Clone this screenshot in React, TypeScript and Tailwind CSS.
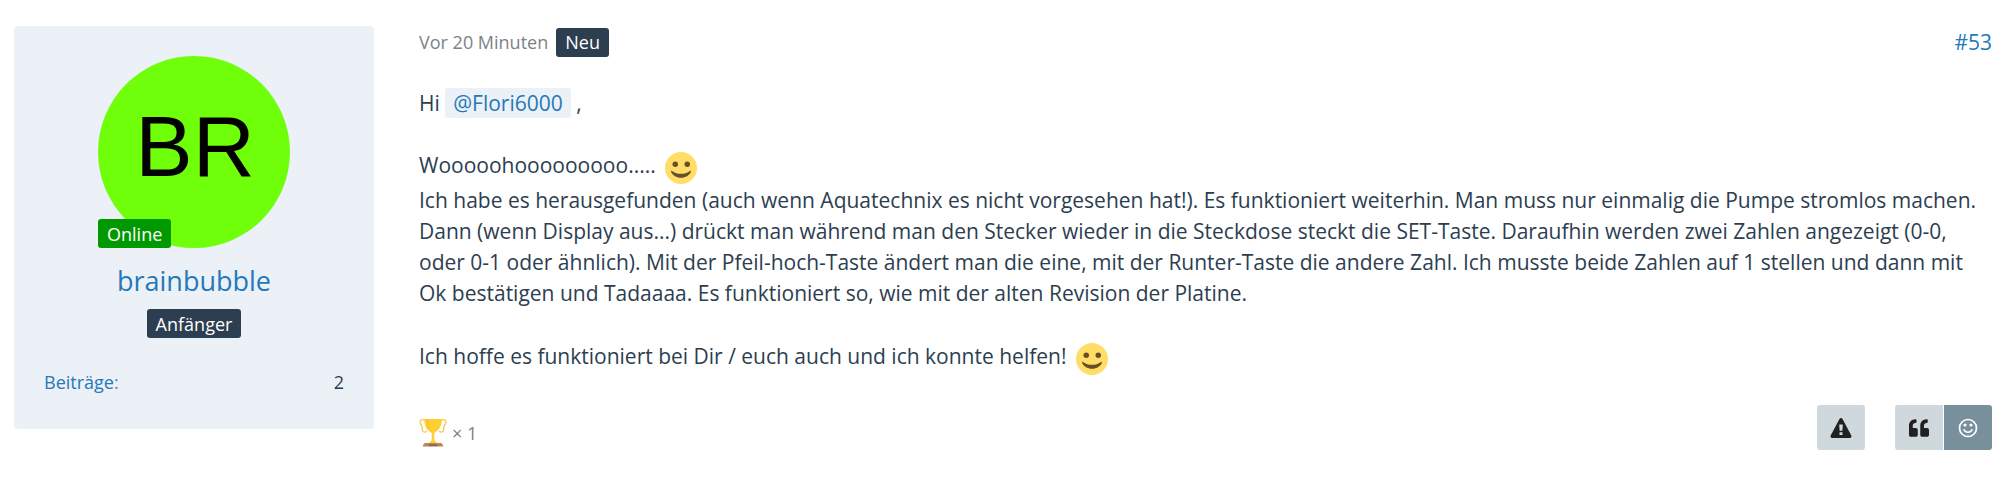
import { FaQuoteLeft } from "react-icons/fa";

const badge = "inline-flex h-[29px] items-center rounded-[3px] px-[9px] text-lg leading-none text-white";

function Smiley() {
  return (
    <svg viewBox="0 0 64 64" className="mb-[1px] ml-1 inline-block size-8 align-[-12px]" role="img" aria-label="Smiley">
      <circle cx="32" cy="32" r="32" fill="#ffdd67" />
      <circle cx="20.500" cy="24.500" r="5.500" fill="#664e27" />
      <circle cx="44.500" cy="24.500" r="5.500" fill="#664e27" />
      <path d="M50 38c-10.700 7.700-25.300 7.600-36 0-1.300-.9-2.500.6-1.500 2.300C16 46.500 22.300 51.300 32 51.300s16-4.800 19.500-11c1-1.700-.2-3.200-1.500-2.300z" fill="#664e27" />
    </svg>
  );
}

function Trophy() {
  return (
    <svg viewBox="0 0 64 64" className="size-7" role="img" aria-label="Pokal">
      <path
        d="M16 4C11 1 5 1 3 4c-2 4 1 8 4 13 2 4-1 7 1 10 2 4 7 4 10 0M48 4c5-3 11-3 13 0 2 4-1 8-4 13-2 4 1 7-1 10-2 4-7 4-10 0"
        fill="none"
        stroke="#fbc84f"
        strokeWidth="3"
      />
      <path d="M12 0h40c0 15-5 25-15 30-3 2-2 5-2 8v9c0 4 4 5 7 8H22c3-3 7-4 7-8v-9c0-3 1-6-2-8C17 25 12 15 12 0z" fill="#ffce31" />
      <path d="M18 1c1 13 4 20 10 26C23 20 21 12 21 1z" fill="#f5b72f" />
      <path d="M12 55h40v4H12zM9 58h46v5H9z" fill="#bc845f" />
      <path d="M22 58h20v4H22z" fill="#89664c" />
    </svg>
  );
}

export default function App() {
  return (
    <article className="flex items-start gap-[45px] px-4 pt-[26px] pl-[14px] font-['Open_Sans','Noto_Sans',sans-serif] text-[21px] leading-[31px] text-[#2c3e50]">
      <aside className="w-[360px] shrink-0 rounded-[4px] bg-[#ecf0f7] p-[30px] pb-[33px] text-center">
        <div className="relative mx-auto size-48">
          <div className="flex size-full items-center justify-center rounded-full bg-[#70ff0a] pb-3 pl-[2px] font-['Liberation_Sans',sans-serif] text-[86px] leading-none text-black">
            BR
          </div>
          <span className={`${badge} absolute bottom-0 left-0 bg-[#009900]`}>Online</span>
        </div>
        <h3 className="mt-[15px] text-[27px] leading-9">
          <a href="#brainbubble" className="text-[#2479b9]">brainbubble</a>
        </h3>
        <div className="mt-[10px] flex justify-center">
          <span className={`${badge} bg-[#2c3e50]`}>Anfänger</span>
        </div>
        <dl className="mt-[30px] flex justify-between text-lg leading-7">
          <dt className="text-[#7d8287]">
            <a href="#posts" className="text-[#2479b9]">Beiträge</a>:
          </dt>
          <dd>2</dd>
        </dl>
      </aside>

      <div className="min-w-0 grow">
        <header className="flex h-8 items-center">
          <time className="text-lg text-[#7d8287]">Vor 20 Minuten</time>
          <span className={`${badge} ml-2 bg-[#2c3e50]`}>Neu</span>
          <a href="#53" className="ml-auto text-[#2479b9]">#53</a>
        </header>

        <div className="mt-[30px]">
          <p>
            Hi{" "}
            <a href="#Flori6000" className="rounded-[3px] bg-[#ecf0f7] px-2 py-px text-[#2479b9]">@Flori6000</a>{" "}
            ,
          </p>
          <p className="mt-[31px]">
            Wooooohooooooooo..... <Smiley />
            <br />
            Ich habe es herausgefunden (auch wenn Aquatechnix es nicht vorgesehen hat!). Es funktioniert weiterhin. Man
            muss nur einmalig die Pumpe stromlos machen. Dann (wenn Display aus...) drückt man während man den Stecker
            wieder in die Steckdose steckt die SET-Taste. Daraufhin werden zwei Zahlen angezeigt (0-0, oder 0-1 oder
            ähnlich). Mit der Pfeil-hoch-Taste ändert man die eine, mit der Runter-Taste die andere Zahl. Ich musste
            beide Zahlen auf 1 stellen und dann mit Ok bestätigen und Tadaaaa. Es funktioniert so, wie mit der alten
            Revision der Platine.
          </p>
          <p className="mt-8">
            Ich hoffe es funktioniert bei Dir / euch auch und ich konnte helfen! <Smiley />
          </p>
        </div>

        <footer className="mt-[29px] flex items-end justify-between">
          <a href="#reactions" className="flex items-center gap-[5px] pb-[3px] text-lg leading-7 text-[#7d8287]">
            <Trophy />× 1
          </a>
          <div className="flex h-[45px]">
            <button aria-label="Inhalt melden" className="mr-[30px] flex w-12 items-center justify-center rounded-[3px] bg-[#cfd8dc] text-[#212121]">
              <svg viewBox="0 0 22 20" className="h-5 w-[22px]" fill="currentColor">
                <path fillRule="evenodd" d="M11 0c.6 0 1.100.3 1.400.8l8.900 16.800c.6 1.200-.2 2.400-1.500 2.400H2.200c-1.300 0-2.100-1.200-1.500-2.400L9.600.8C9.900.3 10.400 0 11 0zM9.200 6.500l.4 6.200h2.800l.4-6.200zM9.500 14.200v2.700h3v-2.700z" />
              </svg>
            </button>
            <button aria-label="Zitieren" className="mr-px flex w-12 items-center justify-center rounded-l-[3px] bg-[#cfd8dc] text-[#212121]">
              <FaQuoteLeft className="size-5" />
            </button>
            <button aria-label="Reagieren" className="flex w-12 items-center justify-center rounded-r-[3px] bg-[#78909c] text-white">
              <svg viewBox="0 0 20 20" className="size-5" fill="none" stroke="currentColor">
                <circle cx="10" cy="10" r="8.500" strokeWidth="1.700" />
                <circle cx="7" cy="7" r="1.600" fill="currentColor" stroke="none" />
                <circle cx="13" cy="7" r="1.600" fill="currentColor" stroke="none" />
                <path d="M6 11.800c1.400 3.400 6.600 3.400 8 0" strokeWidth="1.600" strokeLinecap="round" />
              </svg>
            </button>
          </div>
        </footer>
      </div>
    </article>
  );
}
